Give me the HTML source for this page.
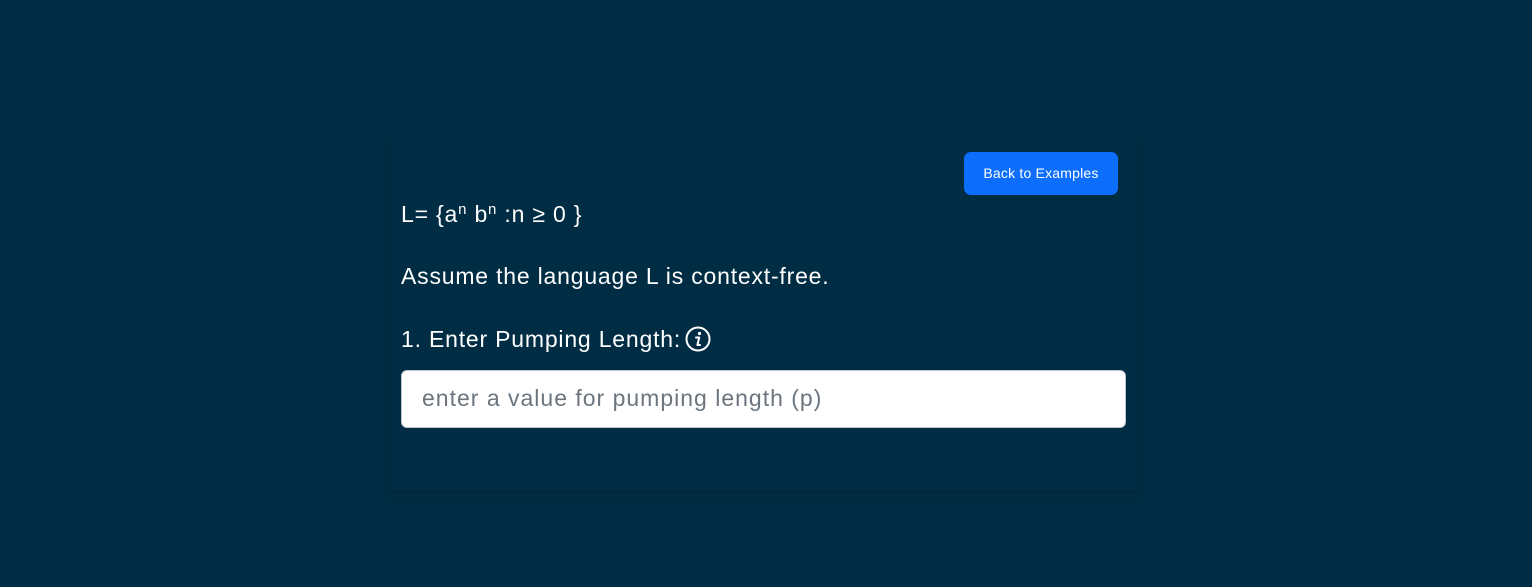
<!DOCTYPE html>
<html><head><style>
html,body{margin:0;padding:0;width:1532px;height:587px;background:#002d44;overflow:hidden;font-family:"Liberation Sans",sans-serif;color:#fff}
.card{position:absolute;left:391px;top:140px;width:746px;height:350px;box-shadow:0 6px 8px rgba(0,0,0,0.12)}
.btn{position:absolute;left:964px;top:152px;width:154px;height:43px;background:#0d6efd;border-radius:7px;color:#fff;font-size:14px;line-height:43px;text-align:center;letter-spacing:0.2px}
.t{position:absolute;left:401px;font-size:23px;white-space:nowrap;letter-spacing:0.8px}
sup{font-size:15px;vertical-align:8px;line-height:0}
.inp{position:absolute;left:401px;top:370px;width:723px;height:56px;background:#fff;border:1px solid #bfc6cc;border-radius:6px}
.inp span{position:absolute;left:20px;top:14px;font-size:23px;color:#6c757d;letter-spacing:1px}
</style></head><body>
<div class="card"></div>
<div class="btn">Back to Examples</div>
<div class="t" style="top:201px">L= {a<sup>n</sup> b<sup>n</sup> :n ≥ 0 }</div>
<div class="t" style="top:263px">Assume the language L is context-free.</div>
<div class="t" style="top:326px">1. Enter Pumping Length:<svg width="26" height="26" viewBox="0 0 26 26" style="vertical-align:-5px;margin-left:4px"><circle cx="13" cy="13" r="11.5" fill="none" stroke="#fff" stroke-width="2"/><circle cx="14.5" cy="7.5" r="1.6" fill="#fff"/><path d="M11 11.5h3.2l-1.8 7.5h2.6" fill="none" stroke="#fff" stroke-width="2" stroke-linecap="round" stroke-linejoin="round"/></svg></div>
<div class="inp"><span>enter a value for pumping length (p)</span></div>
</body></html>
